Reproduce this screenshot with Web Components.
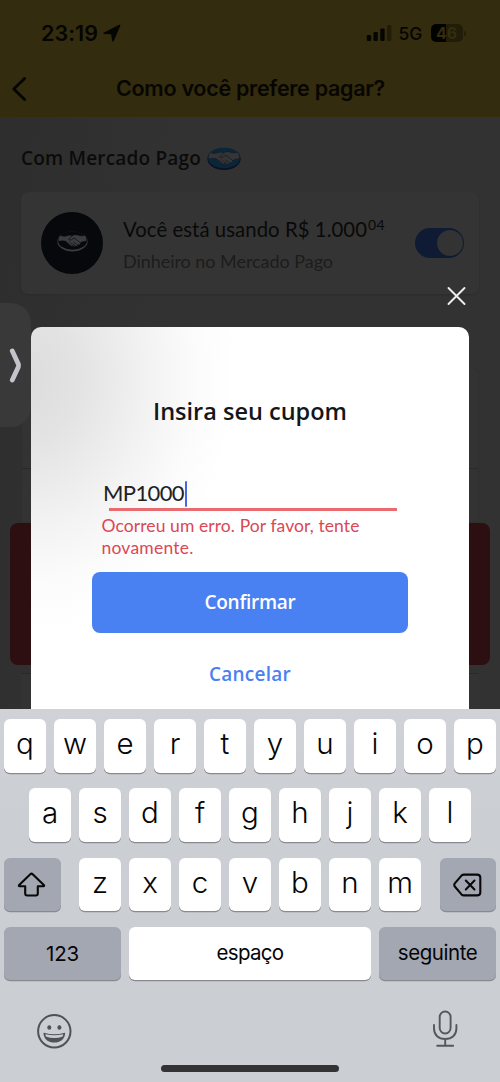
<!DOCTYPE html>
<html lang="pt-BR">
<head>
<meta charset="utf-8">
<title>Como você prefere pagar?</title>
<style>
html,body{margin:0;padding:0;background:#323232}
body{width:500px;height:1082px;overflow:hidden;font-family:Inter,"Liberation Sans",sans-serif}
</style>
</head>
<body>
<pay-app></pay-app>
<script>
const define = (name, html, after) => {
  const t = document.createElement('template');
  t.innerHTML = html;
  customElements.define(name, class extends HTMLElement {
    connectedCallback() {
      if (this.shadowRoot) return;
      this.attachShadow({mode: 'open'}).appendChild(t.content.cloneNode(true));
      if (after) after.call(this, this.shadowRoot);
    }
  });
};

/* One line of text whose tracking is adjusted to a set width. */
define('fit-text', `<style>
:host{display:block;flex:none;white-space:nowrap}
span{display:inline-block;vertical-align:top}
</style><span><slot></slot></span>`, function (root) {
  const s = root.querySelector('span');
  const w = +this.getAttribute('w'), n = this.textContent.length;
  this.style.width = w + 'px';
  s.style.letterSpacing = ((w - s.getBoundingClientRect().width) / n) + 'px';
});

define('hand-shake', `<style>:host{display:block}svg{display:block;width:100%;height:100%}</style>
<svg viewBox="0 0 34 23">
<ellipse cx="17" cy="12" rx="16.600" ry="11" fill="var(--rim)"/>
<ellipse cx="17" cy="11" rx="16" ry="10.200" fill="var(--sea)"/>
<path d="M3.300 5.200C6 6.600 9 6.800 12 5.600c1.800-.7 3.200-.6 4.800.2 2-1.300 4.500-1.500 6.700-.6 2.500.9 5 .9 7.400 0 1.500 2 2 4.500 1.500 6.600-2.300 0-4.700.5-6.600 1.600.2 1.500-1 2.500-2.400 2.200-.4 1.300-1.600 1.800-2.700 1.400-1.200 1.200-2.700 1-3.500.1-1.300.5-2.400-.2-2.600-1.300-1.300.1-2.200-.6-2.200-1.600-1.200 0-2-.9-1.800-1.900C8 11.200 4.800 11 1.500 12 1 9.500 1.700 7.200 3.300 5.200z" fill="var(--hand)" stroke="var(--ink)" stroke-width=".5"/>
<path d="M16.800 5.800l-4.300 4c1.500 1.200 3.300.8 5.200-1l1.800-.2 6.200 5M12.600 14.100l1.600-1.800M15 15.500l1.600-2M17.400 17l1.300-1.800M18.500 12.800l4.300 3.400M17 14.800l3.500 2.800" fill="none" stroke="var(--ink)" stroke-width=".7"/>
</svg>`);

define('status-bar', `<style>
:host{display:flex;height:68px;color:#050502}
.time{font-size:21.500px;font-weight:600;line-height:30px;margin:18px 0 0 41px}
.loc{width:18px;height:18px;margin:24px 0 0 5px}
.sig{width:26px;height:18px;margin:24px 0 0 244.500px}
.net{font-size:17.500px;font-weight:500;line-height:24px;margin:22px 0 0 7px}
.bat{display:flex;width:32px;height:18px;border-radius:5px;margin:24px 0 0 8.500px;background:linear-gradient(90deg,#020200 48%,#211d09 48%)}
.bat fit-text{font-size:16px;font-weight:700;line-height:18px;margin-left:5px;color:#332c0e}
.tip{width:2px;height:5px;border-radius:0 3px 3px 0;background:#211d09;margin:31px 0 0 1px}
</style>
<fit-text class="time" w="57">23:19</fit-text>
<svg class="loc" viewBox="0 0 18 18"><path d="M.6 8.700 16.200.8q1.500-.4 1 1.100L10.700 17q-.9 1.300-1.600-.2L8.200 10.200 1 10.100q-1.500-.3-.4-1.400z" fill="#050502"/></svg>
<svg class="sig" viewBox="0 0 26 18"><g fill="#050502"><rect x=".8" y="11" width="4.300" height="6" rx="1.200"/><rect x="7.500" y="8" width="4.300" height="9" rx="1.200"/><rect x="14.300" y="4.500" width="4.300" height="12.500" rx="1.200"/></g><rect x="21" y="1" width="4.300" height="16" rx="1.200" fill="#211d09"/></svg>
<fit-text class="net" w="24">5G</fit-text>
<div class="bat"><fit-text w="21">46</fit-text></div><div class="tip"></div>`);

define('page-header', `<style>
:host{display:block;height:117px;background:#332c0e;color:#070602}
.nav{display:flex}
svg{width:16px;height:26px;margin:7.500px 0 0 11px}
fit-text{font-size:21.500px;font-weight:600;line-height:30px;margin:5px 0 0 89px}
</style>
<status-bar></status-bar>
<div class="nav"><svg viewBox="0 0 16 26"><path d="M13.600 2.500 2.800 13l10.800 10.500" fill="none" stroke="#050502" stroke-width="2.900" stroke-linecap="round" stroke-linejoin="round"/></svg>
<fit-text w="269">Como você prefere pagar?</fit-text></div>`);

define('toggle-switch', `<style>
:host{display:block;box-sizing:border-box;width:49px;height:30px;border-radius:15px;background:#0f1a34;padding:2px}
i{display:block;width:26px;height:26px;border-radius:50%;background:#333;margin-left:19.500px}
</style><i></i>`);

define('balance-card', `<style>
:host{display:flex;box-sizing:border-box;width:458px;height:102px;border-radius:7px;background:#343434;box-shadow:0 1px 2px #2c2c2c;font-family:Lato,sans-serif}
.disc{width:62px;height:62px;border-radius:50%;background:#06080c;margin:20px 0 0 20px;display:flex;align-items:center;justify-content:center;flex:none}
hand-shake{width:31px;height:22px;margin-top:-4px;--rim:#3b3c3e;--sea:#06080c;--hand:#3b3c3e;--ink:#06080c}
.copy{margin:24px 0 0 20px;width:292px}
.l1{display:flex;height:28px;color:#090909}
.l1 .a{font-size:20.300px;line-height:25px;margin-top:1px}
.l1 .b{font-size:14px;line-height:14px;margin-left:1px;margin-top:2px}
.l2{font-size:18px;line-height:24px;color:#1c1c1c;margin-top:4.500px}
toggle-switch{margin-top:36px;flex:none}
</style>
<div class="disc"><hand-shake></hand-shake></div>
<div class="copy"><div class="l1"><fit-text class="a" w="244">Você está usando R$ 1.000</fit-text><fit-text class="b" w="17">04</fit-text></div>
<fit-text class="l2" w="210">Dinheiro no Mercado Pago</fit-text></div>
<toggle-switch></toggle-switch>`);

define('pay-page', `<style>
:host{display:block;height:1082px;background:linear-gradient(100deg,#2d2d2d,#323232 30%);overflow:hidden}
.head{display:flex;height:75px;font-family:"Open Sans",sans-serif;color:#0b0b0b}
.head fit-text{font-size:19px;font-weight:600;line-height:26px;margin:28px 0 0 21px}
.head hand-shake{width:34px;height:23px;margin:30px 0 0 6px;--rim:#0b1024;--sea:#0b2737;--hand:#353535;--ink:#11162a}
balance-card{margin-left:21px}
.opt{box-sizing:border-box;width:458px;margin:73px 0 0 21px;height:156px;border-radius:7px 7px 0 0;background:#333;border:1px solid #2f2f2f}
.opt i{display:block;height:1px;background:#292929;margin-top:100px}
.red{width:480px;height:142px;margin:0 0 0 10px;border-radius:8px;background:#2d0e11}
.next{width:458px;height:60px;margin:8px 0 0 21px;border-top:1px solid #292929;background:#333}
</style>
<page-header></page-header>
<div class="head"><fit-text w="180">Com Mercado Pago</fit-text><hand-shake></hand-shake></div>
<balance-card></balance-card>
<div class="opt"><i></i></div><div class="red"></div><div class="next"></div>`);

define('side-tab', `<style>
:host{display:block;width:31px;height:124px;background:#393939;border-radius:0 20px 20px 0}
svg{display:block;width:31px;height:124px}
</style><svg viewBox="0 0 31 124"><path d="M12.300 48l6 13q.6 1.500 0 3l-6 13" fill="none" stroke="#c6c4cb" stroke-width="4.800" stroke-linecap="round" stroke-linejoin="round"/></svg>`);

define('coupon-dialog', `<style>
:host{display:block;box-sizing:border-box;width:438px;height:382px;border-radius:10px 10px 0 0;font-family:Lato,sans-serif;
background:radial-gradient(ellipse 210px 255px at -5px 50px,#dcdcdc,#e3e3e3 25%,#f3f3f3 60%,#fbfbfb 80%,#fff);padding-top:69px}
.t{font-family:"Open Sans",sans-serif;font-size:23.500px;font-weight:600;line-height:30px;color:#151617;margin-left:122px}
.in{display:flex;height:26px;margin:54.500px 0 0 72px}
.in fit-text{font-size:22px;line-height:26px;margin-top:-1px;color:#222}
.in i{width:2.500px;height:26px;background:#4865e4;border-radius:1px;margin-left:.5px}
.line{width:288px;height:3px;background:#e96b70;margin:1px 0 0 78px}
.err{color:#da4854;font-size:17.500px;line-height:21.500px;margin:4.500px 0 0 70.500px}
.btn{display:flex;justify-content:center;width:316px;height:61px;border-radius:8px;background:#4a81f2;margin:14px 0 0 61px;color:#fff}
.btn fit-text,.c{font-family:"Open Sans",sans-serif;font-size:19px;font-weight:600;line-height:60px}
.c{color:#4a81f2;margin:11px 0 0 178px}
</style>
<fit-text class="t" w="194">Insira seu cupom</fit-text>
<div class="in"><fit-text w="81">MP1000</fit-text><i></i></div>
<div class="line"></div>
<div class="err"><fit-text w="258">Ocorreu um erro. Por favor, tente</fit-text><fit-text w="92">novamente.</fit-text></div>
<div class="btn"><fit-text w="91">Confirmar</fit-text></div>
<fit-text class="c" w="82">Cancelar</fit-text>`);

define('dialog-layer', `<style>
:host{display:block;height:709px}
.close{display:block;width:20px;height:20px;padding:286px 0 0 446.500px}
.row{display:flex;margin-top:-3px}
coupon-dialog{margin-top:24px}
</style>
<svg class="close" viewBox="0 0 20 20"><path d="M2 2l16 16M18 2 2 18" stroke="#eee" stroke-width="1.900" stroke-linecap="round"/></svg>
<div class="row"><side-tab></side-tab><coupon-dialog></coupon-dialog></div>`);

define('key-cap', `<style>
:host{display:flex;justify-content:center;box-sizing:border-box;width:42px;height:53.500px;border-radius:6px;background:#fff;box-shadow:0 1.300px 0 #898a8d;
color:#050505;font-size:29.500px;font-weight:350;line-height:48.500px;flex:none}
:host([dark]){background:#a3a7b2}
:host([word]){font-weight:400;font-size:20.500px;line-height:51px}
</style><slot></slot>`);

define('ios-keyboard', `<style>
:host{display:block;box-sizing:border-box;height:373px;background:linear-gradient(#d0d2d8,#cbced3 30%);padding-top:10px}
.r{display:flex;justify-content:center;gap:8px;height:69.300px}
.r3,.r4{justify-content:space-between;margin:0 4px}
.r3 div{display:flex;gap:8px}
.side{width:56.500px}
svg{display:block}
.bot{display:flex;justify-content:space-between;margin:0 41px 0 36px;height:50.500px}
.bar{width:178px;height:7px;border-radius:4px;background:#333;margin:18px auto 0}
</style>
<div class="r"></div><div class="r"></div>
<div class="r r3">
<key-cap dark class="side"><svg width="30" height="54" viewBox="0 0 30 54"><path d="M13.800 16.400q1.200-1.200 2.400 0L27.300 27.200q.9 1.200-.5 1.300H21.300v7.200q0 2-2 2H10.700q-2 0-2-2v-7.200H3.200q-1.400-.1-.5-1.300z" transform="translate(-.5 -.2)" fill="none" stroke="#080808" stroke-width="2.100" stroke-linejoin="round"/></svg></key-cap>
<div></div>
<key-cap dark class="side"><svg width="30" height="54" viewBox="0 0 30 54"><path d="M11 16.600h13q3.300 0 3.300 3v14.800q0 3-3.300 3H11q-1.500 0-2.500-1L2 28.800q-1.500-1.800 0-3.600l6.500-7.600q1-1 2.500-1z" fill="none" stroke="#080808" stroke-width="2.100" stroke-linejoin="round"/><path d="M12.800 22.500l8.700 9M21.500 22.500l-8.700 9" stroke="#080808" stroke-width="2" stroke-linecap="round"/></svg></key-cap>
</div>
<div class="r r4"><key-cap dark word style="width:117px;line-height:53.500px"><fit-text w="33">123</fit-text></key-cap><key-cap word style="width:242px"><fit-text w="67">espaço</fit-text></key-cap><key-cap dark word style="width:117px"><fit-text w="79.500">seguinte</fit-text></key-cap></div>
<div class="bot">
<svg style="margin-top:16.500px" width="37" height="37" viewBox="0 0 37 37"><circle cx="18.300" cy="18.300" r="16.200" fill="none" stroke="#505256" stroke-width="2"/><ellipse cx="13.300" cy="14.500" rx="2" ry="2.300" fill="#505256"/><ellipse cx="23.400" cy="14.500" rx="2" ry="2.300" fill="#505256"/><path d="M8 19.700q10.300 3 20.600 0 .7 0 .5 1.200c-.9 5.600-5 8.600-10.800 8.600s-9.900-3-10.800-8.600q-.2-1.200.5-1.200z" fill="#505256"/><path d="M9.300 21.200q9 2.300 18 0l-.6 2.300q-8.400 3.200-16.800 0z" fill="#cbced3"/></svg>
<svg style="margin-top:14px" width="28" height="39" viewBox="0 0 28 39"><g fill="none" stroke="#55575b" stroke-width="1.900" stroke-linecap="round"><rect x="8.700" y="1.500" width="10.900" height="22" rx="5.400"/><path d="M3 15v3.500c0 6.500 4.500 10.500 11.200 10.500s11.200-4 11.200-10.500V15M14.200 29v6.500M6.200 35.700h16"/></g></svg>
</div>
<div class="bar"></div>`, function (root) {
  const rows = root.querySelectorAll('.r');
  [[rows[0], 'qwertyuiop'], [rows[1], 'asdfghjkl'], [root.querySelector('.r3 div'), 'zxcvbnm']].forEach(([row, keys]) => {
    for (const k of keys) {
      const cap = document.createElement('key-cap');
      cap.textContent = k;
      row.append(cap);
    }
  });
});

define('pay-app', `<style>
:host{display:grid;grid-template:1082px/500px;overflow:hidden}
:host>*{grid-area:1/1}
pay-page,dialog-layer,ios-keyboard{grid-area:1/1}
ios-keyboard{align-self:end}
</style><pay-page></pay-page><dialog-layer></dialog-layer><ios-keyboard></ios-keyboard>`);
</script>
</body>
</html>
